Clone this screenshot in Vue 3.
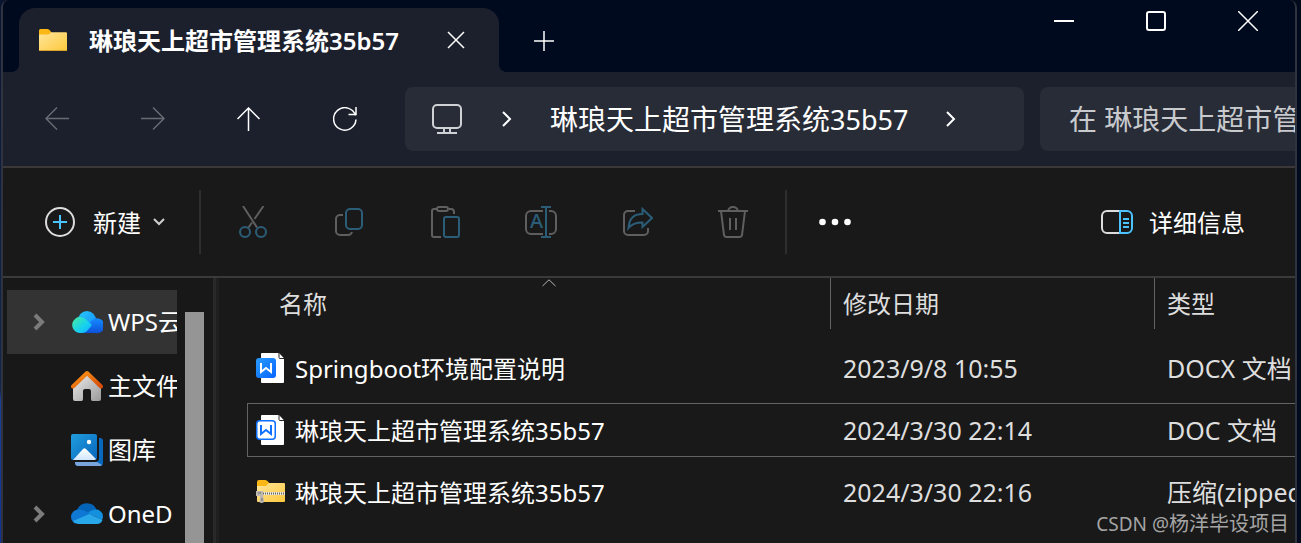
<script setup>
const places = [
  { name: 'WPS云盘', icon: 'wps', expandable: true, active: true },
  { name: '主文件夹', icon: 'home' },
  { name: '图库', icon: 'gallery' },
  { name: 'OneD', icon: 'onedrive', expandable: true },
]

const files = [
  { name: 'Springboot环境配置说明', date: '2023/9/8 10:55', type: 'DOCX 文档', icon: 'docx' },
  { name: '琳琅天上超市管理系统35b57', date: '2024/3/30 22:14', type: 'DOC 文档', icon: 'doc', focused: true },
  { name: '琳琅天上超市管理系统35b57', date: '2024/3/30 22:16', type: '压缩(zipped)文件夹', icon: 'zip' },
]
</script>

<template>
  <div class="window">
    <header class="titlebar">
      <div class="tab">
        <svg class="tab-icon" width="28" height="22" viewBox="0 0 28 22" aria-hidden="true">
          <defs>
            <linearGradient id="folder" x1="0" y1="0" x2="1" y2="1">
              <stop offset="0" stop-color="#ffe69b" />
              <stop offset="1" stop-color="#fdc83c" />
            </linearGradient>
          </defs>
          <path d="M0 7V1.500Q0 0 1.500 0H8.500Q10 0 11 1.500L12.500 3.500 10 7Z" fill="#fbb716" />
          <path d="M0 5.500H9Q10 5.500 11 4.500L12 3.200H27Q28 3.200 28 4.200V21Q28 22 27 22H1Q0 22 0 21Z" fill="url(#folder)" />
          <path d="M0 21.500H28" stroke="#d9a32c" />
        </svg>
        <span class="tab-title">琳琅天上超市管理系统35b57</span>
        <button class="tab-close" aria-label="关闭标签页">
          <svg width="18" height="18" viewBox="0 0 18 18"><path class="line" d="M1 1L17 17M17 1L1 17" /></svg>
        </button>
      </div>
      <button class="tab-add" aria-label="新建标签页">
        <svg width="20" height="20" viewBox="0 0 20 20"><path class="line" d="M0 10H20M10 0V20" /></svg>
      </button>
      <div class="window-controls">
        <button aria-label="最小化">
          <svg width="20" height="20" viewBox="0 0 20 20"><path class="line thick" d="M0 10H20" /></svg>
        </button>
        <button aria-label="最大化">
          <svg width="20" height="20" viewBox="0 0 20 20"><rect class="line thick" x="1" y="1" width="18" height="18" rx="2" /></svg>
        </button>
        <button aria-label="关闭">
          <svg width="20" height="20" viewBox="0 0 20 20"><path class="line" d="M0 0L20 20M20 0L0 20" /></svg>
        </button>
      </div>
    </header>

    <nav class="navbar" aria-label="导航">
      <button class="nav-button" disabled aria-label="后退">
        <svg width="24" height="24" viewBox="0 0 24 24"><path class="line faded" d="M24 11.500H1M12 0.500L1 11.500L12 22.500" /></svg>
      </button>
      <button class="nav-button" disabled aria-label="前进">
        <svg width="24" height="24" viewBox="0 0 24 24"><path class="line faded" d="M0 11.500H23M12 0.500L23 11.500L12 22.500" /></svg>
      </button>
      <button class="nav-button" aria-label="向上">
        <svg width="24" height="24" viewBox="0 0 24 24"><path class="line" d="M11.500 24V1M0.500 12L11.500 1L22.500 12" /></svg>
      </button>
      <button class="nav-button" aria-label="刷新">
        <svg width="24" height="24" viewBox="0 0 24 24">
          <path class="line" d="M22.500 8.500A11.200 11.200 0 1 0 23 12.500M23 0V7.500H15.500" />
        </svg>
      </button>
      <div class="address">
        <svg class="monitor" width="30" height="30" viewBox="0 0 30 30" fill="none" stroke="#cfd1d4" stroke-width="2" aria-hidden="true">
          <rect x="1" y="1" width="28" height="23" rx="4" />
          <path d="M12 24V29M18 24V29M5 29H25" />
        </svg>
        <svg class="crumb-arrow" width="10" height="16" viewBox="0 0 10 16" aria-hidden="true"><path class="line thick" d="M1 1L8 8L1 15" /></svg>
        <a class="crumb" href="#">琳琅天上超市管理系统<span class="latin">35b57</span></a>
        <svg class="crumb-arrow" width="10" height="16" viewBox="0 0 10 16" aria-hidden="true"><path class="line thick" d="M1 1L8 8L1 15" /></svg>
      </div>
      <input class="search" type="text" aria-label="搜索" placeholder="在 琳琅天上超市管理系统35b57 中搜索" />
    </nav>

    <div class="commands" role="toolbar" aria-label="命令">
      <button class="new-button">
        <svg width="30" height="30" viewBox="0 0 30 30" fill="none" stroke-width="2" aria-hidden="true">
          <circle cx="15" cy="15" r="14" stroke="#dcdcdc" />
          <path d="M8 15H22M15 8V22" stroke="#4cc2ff" />
        </svg>
        <span class="label new-label">新建</span>
        <svg width="12" height="8" viewBox="0 0 12 8" fill="none" stroke="#cfcfcf" stroke-width="2" aria-hidden="true"><path d="M1 1L6 6L11 1" /></svg>
      </button>
      <span class="separator"></span>
      <button class="tool" disabled aria-label="剪切">
        <svg class="glyph" width="32" height="32" viewBox="0 0 32 32">
          <path d="M6 0L20 21.500M26.500 0L17.500 13M15 16.500L11.500 21.500" />
          <g class="accent"><circle cx="8" cy="26" r="5" /><circle cx="24" cy="26" r="5" /></g>
        </svg>
      </button>
      <button class="tool" disabled aria-label="复制">
        <svg class="glyph" width="32" height="32" viewBox="0 0 32 32">
          <path d="M10 9H7a4 4 0 0 0-4 4v12a4 4 0 0 0 4 4h8q3 0 4-3" />
          <rect class="accent" x="13" y="3" width="16" height="20" rx="4" />
        </svg>
      </button>
      <button class="tool" disabled aria-label="粘贴">
        <svg class="glyph" width="32" height="32" viewBox="0 0 32 32">
          <path d="M8 3H5Q3 3 3 5V29Q3 31 5 31H12M20 3H22Q25 3 25 6V8" />
          <rect x="8" y="1" width="11" height="4" rx="2" />
          <rect class="accent" x="15" y="11" width="15" height="20" rx="2" />
        </svg>
      </button>
      <button class="tool" disabled aria-label="重命名">
        <svg class="glyph" width="32" height="32" viewBox="0 0 32 32">
          <path d="M18 5H6a5 5 0 0 0-5 5v13a5 5 0 0 0 5 5H18M24 5h2a5 5 0 0 1 5 5v13a5 5 0 0 1-5 5h-2" />
          <path class="accent" d="M16 1H26M16 31H26M21 1V31" />
          <text class="glyph-letter" x="11.500" y="22" text-anchor="middle">A</text>
        </svg>
      </button>
      <button class="tool" disabled aria-label="共享">
        <svg class="glyph" width="32" height="32" viewBox="0 0 32 32">
          <path d="M14 5H7a4 4 0 0 0-4 4v16a4 4 0 0 0 4 4h16a4 4 0 0 0 4-4v-3" />
          <path class="accent" d="M21.500 3L31 12L21.500 21V16.500C15 16.500 11 17.500 7.500 22C8 13 13 8 21.500 8Z" />
        </svg>
      </button>
      <button class="tool" disabled aria-label="删除">
        <svg class="glyph" width="32" height="32" viewBox="0 0 32 32">
          <path d="M1 5H31M11 5Q12 1 16 1T21 5M4 5L7 29Q7.500 31 9.500 31H22.500Q24.500 31 25 29L28 5M13 12V24M19 12V24" />
        </svg>
      </button>
      <span class="separator"></span>
      <button class="tool" aria-label="查看更多">
        <svg width="32" height="8" viewBox="0 0 32 8" fill="#fff"><circle cx="3.500" cy="4" r="3.300" /><circle cx="16" cy="4" r="3.300" /><circle cx="28.500" cy="4" r="3.300" /></svg>
      </button>
      <button class="details-button">
        <svg width="32" height="24" viewBox="0 0 32 24" fill="none" stroke-width="2" aria-hidden="true">
          <path d="M19 1H6a5 5 0 0 0-5 5v12a5 5 0 0 0 5 5H19" stroke="#dcdcdc" />
          <path d="M19 1h7a5 5 0 0 1 5 5v12a5 5 0 0 1-5 5h-7ZM22 9H28M22 13H28M22 17H28" stroke="#4cc2ff" />
        </svg>
        <span class="label">详细信息</span>
      </button>
    </div>

    <div class="body">
      <aside class="sidebar">
        <ul class="places">
          <li v-for="place in places" :key="place.name">
            <a class="place" :class="{ active: place.active }" href="#">
              <span class="expander">
                <svg v-if="place.expandable" width="12" height="18" viewBox="0 0 12 18" fill="none" stroke="#7b7b7b" stroke-width="4" aria-hidden="true"><path d="M2 2L9 9L2 16" /></svg>
              </span>
              <svg v-if="place.icon === 'wps'" width="32" height="32" viewBox="0 0 32 32" aria-hidden="true">
                <defs>
                  <linearGradient id="wps-top" x1="0" y1="0" x2="1" y2="1"><stop offset="0" stop-color="#28c8f8" /><stop offset="1" stop-color="#128bff" /></linearGradient>
                  <linearGradient id="wps-left" x1="0" y1="0" x2="1" y2="1"><stop offset="0" stop-color="#45eca0" /><stop offset=".6" stop-color="#16d0f0" /><stop offset="1" stop-color="#12aaff" /></linearGradient>
                  <linearGradient id="wps-right" x1="0" y1="0" x2="0" y2="1"><stop offset="0" stop-color="#168cff" /><stop offset="1" stop-color="#0c50d8" /></linearGradient>
                </defs>
                <circle cx="16" cy="14" r="9" fill="url(#wps-top)" />
                <path d="M12 27L19 17A7.500 7.500 0 1 1 24 27Z" fill="url(#wps-right)" />
                <path d="M9 27A8 8 0 1 1 15 13.500L21 19L16 25Q14 27 11 27Z" fill="url(#wps-left)" />
              </svg>
              <svg v-else-if="place.icon === 'home'" width="32" height="32" viewBox="0 0 32 32" aria-hidden="true">
                <defs>
                  <linearGradient id="wall" x1="0" y1="0" x2="1" y2="1"><stop offset="0" stop-color="#ededed" /><stop offset="1" stop-color="#9a9a9a" /></linearGradient>
                  <linearGradient id="roof" x1="0" y1="0" x2="1" y2="1"><stop offset="0" stop-color="#fb9a16" /><stop offset="1" stop-color="#d64a0c" /></linearGradient>
                </defs>
                <path d="M2 15L16 4L30 15V29Q30 31 28 31H21.500Q20 31 20 29V21Q20 19 18 19H14Q12 19 12 21V29Q12 31 10.500 31H4Q2 31 2 29Z" fill="url(#wall)" />
                <path d="M2 16.500L16 3L30 16.500" fill="none" stroke="url(#roof)" stroke-width="4" stroke-linecap="round" stroke-linejoin="round" />
              </svg>
              <svg v-else-if="place.icon === 'gallery'" width="32" height="32" viewBox="0 0 32 32" aria-hidden="true">
                <defs>
                  <linearGradient id="photo" x1="0" y1="0" x2="1" y2="1"><stop offset="0" stop-color="#219edf" /><stop offset="1" stop-color="#0765bb" /></linearGradient>
                  <linearGradient id="hill" x1="0" y1="0" x2="0" y2="1"><stop offset="0" stop-color="#fff" /><stop offset="1" stop-color="#cfe6fb" /></linearGradient>
                </defs>
                <path d="M28 4H29Q32 4 32 7V29Q32 32 29 32H7Q4 32 4 29V28H24Q28 28 28 24Z" fill="#0868bd" />
                <path d="M4 28H26L31 31Q30 32 29 32H7Q4 32 4 28Z" fill="#79a5dc" />
                <rect width="26" height="26" rx="2" fill="url(#photo)" />
                <path d="M2 26L12 15Q13.500 13.500 15 15L25 25Q24.500 26 23 26Z" fill="url(#hill)" />
                <circle cx="18" cy="8" r="2.200" fill="#fff" />
              </svg>
              <svg v-else width="32" height="32" viewBox="0 0 32 32" aria-hidden="true">
                <path d="M6 12A10.500 10.500 0 0 1 25.500 11.500L18 18Z" fill="#0364b8" />
                <path d="M7.500 11.500Q12 11 16 14L23 18L4 25.500Q0 23 0 18.500A7.500 7.500 0 0 1 7.500 11.500Z" fill="#0f78d4" />
                <path d="M17 15Q20 11.500 25.500 11.500A7 7 0 0 1 31 22Z" fill="#1490df" />
                <path d="M2 23L18.500 16L31.500 22Q30 26 26 26H7Q4 26 2 23Z" fill="#28a8ea" />
              </svg>
              <span class="place-name">{{ place.name }}</span>
            </a>
          </li>
        </ul>
        <div class="scrollbar"><div class="thumb"></div></div>
      </aside>

      <main class="listing">
        <table class="files">
          <colgroup><col /><col class="col-date" /><col class="col-type" /></colgroup>
          <thead>
            <tr>
              <th scope="col" class="name-head">
                <span class="head-label">名称</span>
                <svg class="sort" width="14" height="8" viewBox="0 0 14 8" fill="none" stroke="#b4b4b4" aria-hidden="true"><path d="M0.500 7L7 0.800L13.500 7" /></svg>
              </th>
              <th scope="col"><span class="head-label divided">修改日期</span></th>
              <th scope="col"><span class="head-label divided">类型</span></th>
            </tr>
          </thead>
          <tbody>
            <tr v-for="file in files" :key="file.date" :class="{ focused: file.focused }">
              <td class="name">
                <div class="file">
                  <svg v-if="file.icon === 'zip'" width="30" height="32" viewBox="0 0 30 32" aria-hidden="true">
                    <path d="M1 11V6Q1 4 3 4H9Q11 4 12 5.500L14 8L10 11Z" fill="#fbb716" />
                    <path d="M1 10H10L13 7H28Q29 7 29 8V25Q29 26 28 26H2Q1 26 1 25Z" fill="url(#folder)" />
                    <path d="M7 17.500H29" stroke="#ece8dc" stroke-width="3" />
                    <path d="M7 17.500H29" stroke="#6c685e" stroke-width="2" stroke-dasharray="1 1" />
                    <path d="M0 15H7V19L8 26Q7 27 5.500 27T3.500 26L4 20H0Z" fill="#bcb8b1" />
                    <path d="M2 17H5M6 22V25" stroke="#6e6a64" />
                  </svg>
                  <svg v-else width="30" height="32" viewBox="0 0 30 32" aria-hidden="true">
                    <defs>
                      <linearGradient id="word" x1="0" y1="0" x2="1" y2="1"><stop offset="0" stop-color="#289bff" /><stop offset="1" stop-color="#0865ff" /></linearGradient>
                    </defs>
                    <path d="M5 2Q5 1 6 1H22.500L28 6.500V30Q28 31 27 31H6Q5 31 5 30Z" fill="#fff" />
                    <path d="M23 1V5.500Q23 6.500 24 6.500H28" fill="#fff" stroke="#242424" />
                    <rect v-if="file.icon === 'docx'" x="0" y="6" width="20" height="20" rx="3" fill="url(#word)" />
                    <rect v-else x="0.750" y="6.750" width="18.500" height="18.500" rx="3" fill="#fff" stroke="#0d70ff" stroke-width="1.500" />
                    <path d="M5 11V20L10 16L15 20V11" fill="none" :stroke="file.icon === 'docx' ? '#fff' : '#0d70ff'" stroke-width="2" />
                  </svg>
                  <span class="label">{{ file.name }}</span>
                </div>
              </td>
              <td>{{ file.date }}</td>
              <td>{{ file.type }}</td>
            </tr>
          </tbody>
        </table>
      </main>
    </div>
    <div class="watermark"><span class="handle">CSDN @</span>杨洋毕设项目</div>
  </div>
</template>

<style>
body {
  margin: 0;
  background: linear-gradient(90deg, transparent 50%, #020b1c 50%), linear-gradient(#0a1630 0, #12264c 390px, #1c3f98 400px, #10309a 100%);
}
</style>

<style scoped>
.window {
  position: relative;
  display: flex;
  flex-direction: column;
  box-sizing: border-box;
  min-height: 100vh;
  margin: 0 4px 0 1px;
  border: solid #2f3340;
  border-width: 0 2px;
  border-radius: 8px 8px 0 0;
  overflow: hidden;
  background: #191919;
  color: #fff;
  font-family: "Noto Sans", "Noto Sans CJK SC", sans-serif;
  font-size: 24px;
  line-height: 32px;
}
button {
  display: flex;
  align-items: center;
  justify-content: center;
  padding: 0;
  border: 0;
  background: none;
  color: inherit;
  font: inherit;
}
a {
  color: inherit;
  text-decoration: none;
}
svg {
  display: block;
  flex: none;
}
.label {
  padding-top: 2px;
}
.line {
  fill: none;
  stroke: #fff;
  stroke-width: 1.5;
}
.thick {
  stroke-width: 2;
}
.faded {
  stroke: #676b74;
}

.titlebar {
  display: flex;
  height: 72px;
  background: #000a1f;
}
.tab {
  position: relative;
  display: flex;
  align-items: center;
  box-sizing: border-box;
  width: 480px;
  margin: 8px 0 0 16px;
  padding: 0 34px 0 20px;
  border-radius: 16px 16px 0 0;
  background: #1b202c;
}
.tab::before,
.tab::after {
  content: "";
  position: absolute;
  bottom: 0;
  width: 8px;
  height: 8px;
}
.tab::before {
  right: 100%;
  background: radial-gradient(circle at 0 0, transparent 8px, #1b202c 8px);
}
.tab::after {
  left: 100%;
  background: radial-gradient(circle at 100% 0, transparent 8px, #1b202c 8px);
}
.tab-title {
  flex: 1;
  margin-left: 22px;
  padding-top: 2px;
  font-weight: 600;
  white-space: nowrap;
}
.tab-add {
  width: 90px;
  margin-top: 10px;
}
.window-controls {
  display: flex;
  height: 42px;
  margin-left: auto;
  padding-right: 1px;
}
.window-controls button {
  width: 92px;
}

.navbar {
  display: flex;
  align-items: center;
  height: 94px;
  padding-left: 6px;
  border-bottom: 2px solid #3a3839;
  background: #1b202c;
  font-size: 28px;
}
.nav-button {
  width: 96px;
  height: 64px;
}
.address {
  display: flex;
  flex: 1;
  align-items: center;
  height: 64px;
  margin: 0 16px 0 12px;
  padding-left: 27px;
  border-radius: 8px;
  background: #272c37;
}
.monitor {
  margin-right: 40px;
}
.crumb {
  margin: 0 38px;
  white-space: nowrap;
}
.latin {
  font-size: 27px;
}
.search {
  box-sizing: border-box;
  width: 255px;
  height: 64px;
  padding: 0 0 0 29px;
  border: 0;
  border-radius: 8px 0 0 8px;
  background: #272c37;
  color: #fff;
  font: inherit;
}
.search::placeholder {
  color: #c8cacd;
  opacity: 1;
}

.commands {
  display: flex;
  align-items: center;
  height: 108px;
  padding: 0 50px 0 42px;
  border-bottom: 2px solid #3a3a3a;
}
.new-label {
  margin: 0 12px 0 18px;
}
.separator {
  width: 2px;
  height: 64px;
  background: #2e2e2e;
}
.new-button + .separator {
  margin: 0 4px 0 34px;
}
.tool {
  width: 96px;
  height: 64px;
}
.glyph {
  fill: none;
  stroke: #5f5f5f;
  stroke-width: 2;
}
.accent {
  stroke: #2b5d78;
}
.glyph-letter {
  fill: #2b5d78;
  stroke: none;
  font: 500 20px "Noto Sans", sans-serif;
}
.tool + .separator {
  margin-left: 4px;
}
.details-button {
  gap: 16px;
  margin-left: auto;
}

.body {
  display: flex;
  flex: 1;
}
.sidebar {
  display: flex;
  width: 210px;
  border-right: 3px solid #292929;
  background: #181818;
}
.places {
  flex: 1;
  min-width: 0;
  margin: 0;
  padding: 12px 0 0 4px;
  list-style: none;
}
.place {
  display: flex;
  align-items: center;
  height: 64px;
  overflow: hidden;
  white-space: nowrap;
}
.place.active {
  background: #333;
}
.expander {
  flex: none;
  width: 38px;
  padding-left: 26px;
}
.place-name {
  margin-left: 5px;
}
.scrollbar {
  width: 19px;
  margin: 34px 9px 0 8px;
}
.thumb {
  height: 100%;
  background: #959595;
}

.listing {
  flex: 1;
  min-width: 0;
  padding-left: 28px;
  border-left: 3px solid #1f1f1f;
}
.files {
  width: 100%;
  margin-top: -8px;
  border-spacing: 0 8px;
  table-layout: fixed;
  color: #dedede;
}
.col-date {
  width: 324px;
}
.col-type {
  width: 141px;
}
th,
td {
  box-sizing: border-box;
  padding: 0;
  overflow: hidden;
  white-space: nowrap;
}
th {
  position: relative;
  height: 55px;
  font-weight: 400;
  text-align: left;
  vertical-align: top;
}
.head-label {
  display: block;
  height: 51px;
  padding-left: 12px;
  line-height: 52px;
}
.name-head .head-label {
  padding-left: 32px;
}
.divided {
  border-left: 1px solid #636363;
}
.sort {
  position: absolute;
  top: 1px;
  left: 50%;
  margin-left: 3px;
}
td {
  height: 54px;
  padding-left: 13px;
  border: solid transparent;
  border-width: 1px 0;
  font-size: 25px;
}
td.name {
  padding-left: 8px;
  border-left-width: 1px;
  color: #fff;
  font-size: 24px;
}
.focused td {
  border-color: #636363;
}
.file {
  display: flex;
  align-items: center;
  gap: 9px;
}

.watermark {
  position: absolute;
  right: 6px;
  bottom: 8px;
  color: #a5a5a5;
  font-size: 20px;
  line-height: 28px;
}
.handle {
  font-size: 19px;
}
</style>
